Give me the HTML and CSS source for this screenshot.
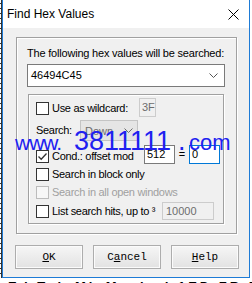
FILE: index.html
```html
<!DOCTYPE html>
<html>
<head>
<meta charset="utf-8">
<link rel="stylesheet" href="styles.css">
</head>
<body>
<div class="screen">
  <div class="edge"></div>
  <div class="window">
    <div class="titlebar">
      <span class="title">Find Hex Values</span>
      <svg class="close" width="11" height="11" viewBox="0 0 11 11"><path d="M0.5 0.5 L10.5 10.5 M10.5 0.5 L0.5 10.5" stroke="#000" stroke-width="1" fill="none"/></svg>
    </div>
    <div class="body">
      <div class="group outer">
        <div class="label">The following hex values will be searched:</div>
        <div class="combo">
          <span class="combo-text">46494C45</span>
          <svg class="chev" width="9" height="5" viewBox="0 0 9 5"><path d="M0.5 0.5 L4.5 4.5 L8.5 0.5" stroke="#555" stroke-width="1" fill="none"/></svg>
        </div>
        <div class="group inner">
          <div class="row r1">
            <div class="check w-wild"><span class="box"></span><span class="text">Use as wildcard:</span></div>
            <div class="field dis f-3f">3F</div>
          </div>
          <div class="row r2">
            <span class="text w-search">Search:</span>
            <div class="dropdown">
              <span class="dd-text">Down</span>
              <svg class="dd-chev" width="9" height="5" viewBox="0 0 9 5"><path d="M0.5 0.5 L4.5 4.5 L8.5 0.5" stroke="#6d6d6d" stroke-width="1" fill="none"/></svg>
            </div>
          </div>
          <div class="row r3">
            <div class="check w-cond"><span class="box checked"><svg width="11" height="11" viewBox="0 0 11 11"><path d="M1.5 5.5 L4.2 8.3 L9.5 2.5" stroke="#333" stroke-width="1.3" fill="none"/></svg></span><span class="text">Cond.: offset mod</span></div>
            <div class="field f-num">512</div>
            <span class="eq">=</span>
            <div class="field f-num focus">0</div>
          </div>
          <div class="row r4">
            <div class="check"><span class="box"></span><span class="text">Search in block only</span></div>
          </div>
          <div class="row r5">
            <div class="check disabled"><span class="box"></span><span class="text">Search in all open windows</span></div>
          </div>
          <div class="row r6">
            <div class="check w-list"><span class="box"></span><span class="text">List search hits, up to ³</span></div>
            <div class="field dis f-hits">10000</div>
          </div>
        </div>
      </div>
      <div class="buttons">
        <div class="btn"><u>O</u>K</div>
        <div class="btn">C<u>a</u>ncel</div>
        <div class="btn"><u>H</u>elp</div>
      </div>
    </div>
  </div>
</div>
<div class="under">Ed Tab Mk Macked 1ED FR Fl FM</div>
<div class="watermark"><span class="www">www.</span><span class="num">3811111</span><span class="dot">.</span><span class="com">com</span></div>
</body>
</html>
```

FILE: styles.css
```css
* { box-sizing: border-box; }
html, body { margin: 0; padding: 0; }
body {
  width: 252px;
  height: 283px;
  overflow: hidden;
  background: #fff;
  position: relative;
  font-family: "Liberation Sans", Arial, sans-serif;
  font-size: 11px;
  color: #000;
}
.screen { display: flex; height: 278px; }
.edge {
  width: 2px;
  border-right: 1px solid #333;
  background: repeating-linear-gradient(to bottom, #fff 0 3px, #333 3px 4px, #fff 4px 5px);
}
.window {
  width: 248px;
  border: 1px solid #1e7bd6;
  border-top: none;
  display: flex;
  flex-direction: column;
}
.titlebar {
  height: 28px;
  background: #fff;
  display: flex;
  align-items: flex-start;
  padding: 7px 10px 0 4px;
}
.title { font-size: 12px; line-height: 14px; }
.close { margin-left: auto; margin-top: 2px; }
.body {
  flex: 1;
  background: #f0f0f0;
  padding: 9px 0 0 13px;
}
.group {
  border: 1px solid #a0a0a0;
  box-shadow: inset 1px 1px #fff, 1px 1px #fff;
}
.outer {
  width: 221px;
  height: 197px;
  padding: 9px 0 0 10px;
}
.label { line-height: 13px; letter-spacing: -0.2px; }
.combo {
  margin-top: 4px;
  width: 198px;
  height: 23px;
  border: 1px solid #7a7a7a;
  background: #fff;
  display: flex;
  align-items: center;
  padding: 0 6px 0 3px;
}
.combo-text { line-height: 13px; }
.chev { margin-left: auto; }
.inner {
  margin: 7px 0 0 1px;
  width: 196px;
  height: 130px;
  padding: 3px 0 0 7px;
  display: flex;
  flex-direction: column;
}
.row { display: flex; align-items: flex-start; }
.r1 { height: 19px; }
.r1 .check { margin-top: 4px; }
.r2 { height: 21px; margin-top: 3px; align-items: center; }
.r3 { height: 20px; margin-top: 4px; }
.r3 .check { margin-top: 5px; }
.r4 { height: 18px; }
.r4 .check { margin-top: 3px; }
.r5 { height: 19px; }
.r5 .check { margin-top: 3px; }
.r6 { height: 18px; }
.r6 .check { margin-top: 3px; }
.check { display: flex; align-items: center; height: 13px; }
.box {
  width: 13px;
  height: 13px;
  border: 1px solid #333;
  background: #fff;
  margin-right: 3px;
  flex: none;
  display: flex;
  align-items: center;
  justify-content: center;
}
.text { line-height: 13px; letter-spacing: -0.3px; white-space: nowrap; }
.disabled .box { border-color: #bcbcbc; background: #f7f7f7; }
.disabled .text { color: #a0a0a0; }
.w-wild { width: 103px; }
.w-search { width: 44px; }
.w-cond { width: 108px; }
.w-list { width: 126px; }
.field {
  height: 19px;
  border: 1px solid #7a7a7a;
  background: #fff;
  line-height: 17px;
  padding-left: 2px;
}
.dis { border-color: #cccccc; background: #f0f0f0; color: #6d6d6d; }
.f-3f { width: 17px; padding-left: 2px; }
.f-num { width: 31px; }
.focus { border-color: #0078d7; }
.eq { width: 14px; text-align: center; line-height: 19px; }
.f-hits { width: 52px; height: 18px; padding-left: 3px; line-height: 16px; }
.dropdown {
  width: 58px;
  height: 21px;
  border: 1px solid #c4c4c4;
  background: #e5e5e5;
  display: flex;
  align-items: center;
  padding: 0 4px 0 4px;
  color: #6d6d6d;
}
.dd-chev { margin-left: auto; }
.buttons {
  display: flex;
  gap: 10px;
  margin: 11px 0 0 -1px;
}
.btn {
  width: 68px;
  height: 24px;
  border: 1px solid #adadad;
  background: linear-gradient(#f6f6f6, #e2e2e2);
  box-shadow: inset 0 0 0 1px #fbfbfb;
  font-family: "Liberation Mono", "Courier New", monospace;
  font-size: 11px;
  display: flex;
  align-items: center;
  justify-content: center;
}
.under {
  height: 5px;
  overflow: hidden;
  font-weight: bold;
  font-size: 13px;
  line-height: 13px;
  padding: 2px 0 0 8px;
  white-space: nowrap;
  letter-spacing: 3px;
}
.watermark {
  position: absolute;
  left: 15px;
  top: 125px;
  height: 32px;
  display: flex;
  align-items: baseline;
  color: #2020f0;
  white-space: nowrap;
  line-height: 32px;
}
.www { font-size: 21px; letter-spacing: -1px; width: 59px; }
.num { font-size: 27px; }
.dot { font-size: 27px; margin-left: 7px; width: 11px; }
.com { font-size: 22px; }
```
